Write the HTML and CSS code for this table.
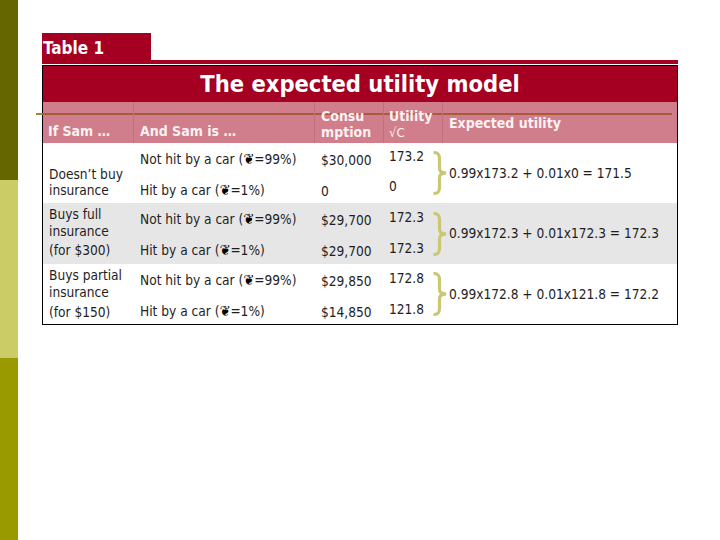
FILE: index.html
```html
<!DOCTYPE html>
<html>
<head>
<meta charset="utf-8">
<link rel="stylesheet" href="styles.css">
</head>
<body>
<div class="slide">
  <div class="sidebar">
    <div class="band band-dark"></div>
    <div class="band band-light"></div>
    <div class="band band-mid"></div>
  </div>
  <div class="content">
    <div class="caption">Table 1</div>
    <div class="caption-strip"></div>
    <div class="table">
      <div class="title">The expected utility model</div>
      <div class="head">
        <div class="h h1">If Sam …</div>
        <div class="h h2">And Sam is …</div>
        <div class="h h3">Consu<br>mption</div>
        <div class="h h4">Utility<br><span class="thin">√C</span></div>
        <div class="h h5">Expected utility</div>
      </div>

      <div class="group">
        <div class="c1 span first">Doesn’t buy<br>insurance</div>
        <div class="c2 r1">Not hit by a car (<span class="sym">❦</span>=99%)</div>
        <div class="c3 r1">$30,000</div>
        <div class="c4 r1 g1">173.2</div>
        <div class="c5"><svg class="brace" viewBox="0 0 15 44" width="15" height="44"><path d="M1.5,1.5 C6,1.5 7.5,3 7.5,8 L7.5,17 C7.5,20.5 9,21.5 14,22 C9,22.5 7.5,23.5 7.5,27 L7.5,36 C7.5,41 6,42.5 1.5,42.5"/></svg><span>0.99x173.2 + 0.01x0 = 171.5</span></div>
        <div class="c2 r2">Hit by a car (<span class="sym">❦</span>=1%)</div>
        <div class="c3 r2">0</div>
        <div class="c4 r2 g1">0</div>
      </div>

      <div class="group gray">
        <div class="c1 r1 top">Buys full<br>insurance</div>
        <div class="c2 r1">Not hit by a car (<span class="sym">❦</span>=99%)</div>
        <div class="c3 r1">$29,700</div>
        <div class="c4 r1">172.3</div>
        <div class="c5"><svg class="brace" viewBox="0 0 15 44" width="15" height="44"><path d="M1.5,1.5 C6,1.5 7.5,3 7.5,8 L7.5,17 C7.5,20.5 9,21.5 14,22 C9,22.5 7.5,23.5 7.5,27 L7.5,36 C7.5,41 6,42.5 1.5,42.5"/></svg><span>0.99x172.3 + 0.01x172.3 = 172.3</span></div>
        <div class="c1 r2">(for $300)</div>
        <div class="c2 r2">Hit by a car (<span class="sym">❦</span>=1%)</div>
        <div class="c3 r2">$29,700</div>
        <div class="c4 r2">172.3</div>
      </div>

      <div class="group last">
        <div class="c1 r1 top">Buys partial<br>insurance</div>
        <div class="c2 r1">Not hit by a car (<span class="sym">❦</span>=99%)</div>
        <div class="c3 r1">$29,850</div>
        <div class="c4 r1">172.8</div>
        <div class="c5"><svg class="brace" viewBox="0 0 15 44" width="15" height="44"><path d="M1.5,1.5 C6,1.5 7.5,3 7.5,8 L7.5,17 C7.5,20.5 9,21.5 14,22 C9,22.5 7.5,23.5 7.5,27 L7.5,36 C7.5,41 6,42.5 1.5,42.5"/></svg><span>0.99x172.8 + 0.01x121.8 = 172.2</span></div>
        <div class="c1 r2 low">(for $150)</div>
        <div class="c2 r2">Hit by a car (<span class="sym">❦</span>=1%)</div>
        <div class="c3 r2">$14,850</div>
        <div class="c4 r2">121.8</div>
      </div>
    </div>
  </div>
  <div class="rule"></div>
</div>
</body>
</html>
```
FILE: styles.css
```css
html, body {
  margin: 0;
  padding: 0;
  background: #ffffff;
}
.slide {
  position: relative;
  width: 720px;
  height: 540px;
  display: flex;
  font-family: "DejaVu Sans Condensed", "DejaVu Sans", sans-serif;
  color: #1e1e1e;
  overflow: hidden;
}
.sidebar {
  width: 18px;
  display: flex;
  flex-direction: column;
}
.band-dark { height: 180px; background: #666600; }
.band-light { height: 178px; background: #cccc66; }
.band-mid { flex: 1; background: #999900; }

.content {
  padding-left: 24px;
  padding-top: 33px;
  width: 636px;
}
.caption {
  width: 109px;
  height: 27px;
  background: #a50021;
  color: #ffffff;
  font-weight: bold;
  font-size: 17px;
  line-height: 20px;
  padding-top: 5px;
  box-sizing: border-box;
  padding-left: 1px;
}
.caption-strip {
  height: 4px;
  background: #a50021;
  margin-bottom: 1px;
}
.table {
  border: 1px solid #000000;
  width: 636px;
  box-sizing: border-box;
}
.title {
  height: 36px;
  background: #a50021;
  color: #ffffff;
  font-weight: bold;
  font-size: 23.5px;
  line-height: 36px;
  text-align: center;
}
.head, .group {
  display: grid;
  grid-template-columns: 90px 181px 69px 59px 235px;
}
.head {
  height: 41px;
  background: #d07e8b;
  color: #fbf1f2;
  font-weight: bold;
  font-size: 14px;
  line-height: 16px;
}
.h {
  padding-left: 6px;
  position: relative;
  z-index: 1;
}
.h2, .h3, .h4, .h5 { border-left: 1px solid #c0707d; }
.h2, .h3 { padding-left: 6px; }
.h1 { padding-top: 21px; padding-left: 5px; }
.h2 { padding-top: 21px; }
.h3 { padding-top: 6px; }
.h4 { padding-top: 6px; padding-left: 5px; }
.h5 { padding-top: 13px; padding-left: 6px; }
.thin { font-weight: normal; font-size: 13px; }

.group {
  grid-template-rows: 30px 1fr;
  height: 60px;
  font-size: 13.6px;
  line-height: 17px;
}
.group.gray { height: 61px; background: #e6e6e6; }
.c1 { grid-column: 1; padding-left: 6px; }
.c2 { grid-column: 2; padding-left: 7px; }
.c3 { grid-column: 3; padding-left: 7px; }
.c4 { grid-column: 4; padding-left: 6px; }
.r1 { grid-row: 1; }
.r2 { grid-row: 2; }
.c1.span { grid-row: 1 / 3; padding-top: 23px; line-height: 16px; }
.c1.top { padding-top: 3px; white-space: nowrap; }
.c1.r2 { padding-top: 9px; }
.c1.r2.low { padding-top: 10px; }
.c2.r1 { padding-top: 8px; }
.c2.r2 { padding-top: 9px; }
.c3.r1 { padding-top: 9px; }
.c3.r2 { padding-top: 10px; }
.c4.r1 { padding-top: 6px; }
.c4.r2 { padding-top: 7px; }
.c4.g1.r1 { padding-top: 5px; }
.c4.g1.r2 { padding-top: 5px; }
.c5 {
  grid-column: 5;
  grid-row: 1 / 3;
  display: flex;
  align-items: center;
  gap: 2px;
}
.brace {
  margin-left: -10px;
  flex: none;
}
.brace path {
  fill: none;
  stroke: #c9c774;
  stroke-width: 3.2;
  stroke-linecap: butt;
}
.sym { font-size: 14.5px; font-weight: bold; color: #000; }

.rule {
  position: absolute;
  left: 36px;
  top: 113px;
  width: 636px;
  height: 2px;
  background: linear-gradient(to right, #9c8a3a 0, #9c8a3a 6px, #a85a3c 6px);
}
```
